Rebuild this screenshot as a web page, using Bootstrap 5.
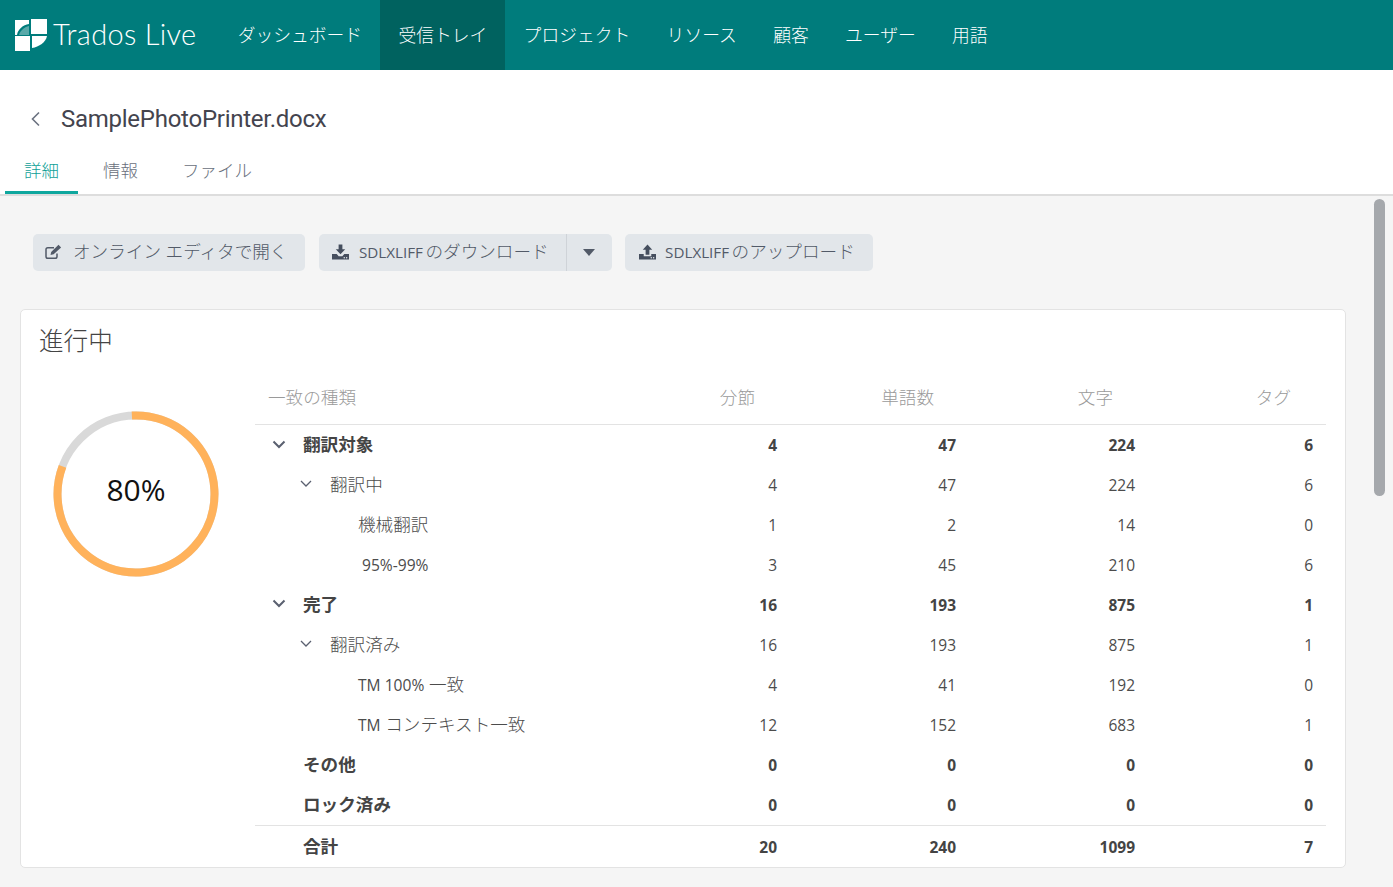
<!DOCTYPE html>
<html lang="ja">
<head>
<meta charset="utf-8">
<title>Trados Live</title>
<link href="https://cdn.jsdelivr.net/npm/bootstrap@5.3.0/dist/css/bootstrap.min.css" rel="stylesheet">
<style>
html,body{height:100%;overflow:hidden}
body{font-family:"Open Sans","Noto Sans CJK JP",sans-serif;font-size:16px;color:#444;background:#fff}
.topbar{height:70px;background:#007c7c;padding:0}
.brand-wrap{gap:6px;padding-left:15px;width:219.5px;color:#fff;flex:none}
.brand-name{font-family:Lato,sans-serif;font-weight:300;font-size:29px;letter-spacing:.3px;line-height:1;padding-bottom:3px}
.topbar .navbar-nav .nav-link{height:70px;display:flex;align-items:center;color:#fff;font-size:17.8px;font-weight:300;padding:0 18.15px}
.topbar .navbar-nav .nav-link.active{background:#00625f;color:#fff}
.head-box{height:126px;border-bottom:2px solid #ddd;background:#fff}
.title-row{height:61px;padding:37px 0 0 29px;gap:18px;align-items:center}
.doc-name{font-family:Roboto,sans-serif;font-size:24px;letter-spacing:-.26px;color:#44444e;line-height:1}
.tab-row{padding-left:5px;margin-top:26px}
.tab-row .nav-link{padding:0 19px 8px;color:#69707c;font-size:17.5px;font-weight:300;line-height:26px;border-bottom:3px solid transparent;margin-right:6px}
.tab-row .nav-link.active{color:#0f9f98;border-bottom-color:#0fa79e}
.workspace{height:691px;background:#f5f5f5;overflow:hidden}
.work-main{width:1346px;padding:38px 0 0 20px;flex:none}
.act-row{padding-left:13px;gap:13.5px;height:37px;margin-bottom:38px}
.act-btn{height:37px;background:#e2e6ea;color:#525a68;border:0;font-size:17.6px;font-weight:300;display:flex;align-items:center;border-radius:5px;white-space:nowrap;padding-top:0;padding-bottom:2px}
.act-btn .lat{font-size:15.2px;font-weight:400}
.act-tight{word-spacing:-2px}
.act-open{padding-left:12px;padding-right:18px;gap:9px}
.act-main{padding-left:13px;padding-right:17px;gap:10px;border-radius:5px 0 0 5px}
.act-up{padding-left:14px;padding-right:18px;gap:9px}
.act-caret{width:46px;justify-content:center;border-left:1px solid #cfd3d8;padding:0;border-radius:0 5px 5px 0}
.panel{height:559px;width:1326px;background:#fff;border:1px solid #e3e3e3;border-radius:5px;padding:14px 19px 0 18px}
.panel-head{font-size:24.6px;font-weight:300;color:#444;line-height:34px;margin:0}
.panel-body{margin-top:14px}
.ring-col{width:216px;flex:none;padding:39px 0 0 13.5px}
.ring-col svg{display:block}
.match-tb{width:1071px;margin:0;table-layout:fixed;border-collapse:collapse;--bs-table-bg:transparent}
.col-name{width:356px}.col-num{width:179px}.col-last{width:178px}
.match-tb th,.match-tb td{padding:3.5px 13px 0 0;border:0;height:40px;vertical-align:middle;text-align:right;font-size:15.5px;color:#4c4c4c;font-weight:400}
.match-tb thead th{height:52px;font-size:17.6px;font-weight:300;color:#9a9a9a;border-bottom:1px solid #e3e3e3;padding:0 35px 2px 0}
.match-tb thead th:first-child,.match-tb td:first-child{text-align:left;padding-right:0;padding-top:0}
.match-tb thead th:first-child{padding-left:13px}
.match-tb td:first-child{font-size:17.6px;font-weight:300}
.match-tb .lv0 td{font-weight:700;color:#444}
.match-tb .lv0 td:first-child{font-weight:700;font-size:17.6px;padding-left:48px}
.match-tb .lv1 td:first-child{padding-left:75px}
.match-tb .lv2 td:first-child{padding-left:103px}
.match-tb tr:nth-last-child(2) td{height:41px}
.match-tb .total td{border-top:1px solid #e3e3e3;height:41px}
.row-inner{display:flex;align-items:center}
.chev{flex:none;display:block}
.chev-a{margin-left:-31px;margin-right:17px}
.chev-b{margin-left:-30px;margin-right:18px}
.lat-sm{font-size:15.6px;font-weight:400}
.rail{flex:1;padding:3px 8px 0 28px}
.rail-thumb{width:11px;height:297px;background:#a5a8ac;border-radius:6px}
</style>
</head>
<body>
<nav class="navbar navbar-expand topbar">
  <div class="d-flex align-items-center brand-wrap">
    <svg width="32" height="32" viewBox="0 0 32 32" fill="#fff"><path d="M16 0h16v15H16z"/><path d="M0 17h15v15H0z"/><path d="M0 1h14v4C8 6 3 10 2 16H0z"/><path d="M14 7C9 8 5 12 4 16h10z" opacity=".35"/><path d="M17 17h15C31 23 24 28 17 29z"/></svg>
    <span class="brand-name">Trados Live</span>
  </div>
  <ul class="navbar-nav">
    <li class="nav-item"><a class="nav-link" href="#">ダッシュボード</a></li>
    <li class="nav-item"><a class="nav-link active" href="#">受信トレイ</a></li>
    <li class="nav-item"><a class="nav-link" href="#">プロジェクト</a></li>
    <li class="nav-item"><a class="nav-link" href="#">リソース</a></li>
    <li class="nav-item"><a class="nav-link" href="#">顧客</a></li>
    <li class="nav-item"><a class="nav-link" href="#">ユーザー</a></li>
    <li class="nav-item"><a class="nav-link" href="#">用語</a></li>
  </ul>
</nav>
<header class="head-box">
  <div class="d-flex title-row">
    <svg width="14" height="16" viewBox="0 0 14 16" fill="none" stroke="#6b7280" stroke-width="1.6"><path d="M10 1.5 3.5 8l6.5 6.5"/></svg>
    <span class="doc-name">SamplePhotoPrinter.docx</span>
  </div>
  <ul class="nav tab-row">
    <li class="nav-item"><a class="nav-link active" href="#">詳細</a></li>
    <li class="nav-item"><a class="nav-link" href="#">情報</a></li>
    <li class="nav-item"><a class="nav-link" href="#">ファイル</a></li>
  </ul>
</header>
<div class="d-flex workspace">
  <main class="work-main">
    <div class="d-flex act-row">
      <button class="btn act-btn act-open" type="button">
        <svg width="19" height="16" viewBox="0 0 19 16" fill="none" stroke="#525a68" stroke-width="1.5"><path d="M12 9.5V12.5a1.8 1.8 0 0 1-1.8 1.8H2.8A1.8 1.8 0 0 1 1 12.5V5.5a1.8 1.8 0 0 1 1.8-1.8H9"/><path d="M5.5 11l.7-3L13.5.8l2.6 2.6L8.6 10.3z" fill="#525a68" stroke="none"/></svg>
        <span>オンライン エディタで開く</span>
      </button>
      <div class="d-flex">
        <button class="btn act-btn act-main" type="button">
          <svg width="17" height="16" viewBox="0 0 18 16" fill="#454e5e"><path d="M7 0h4v5h3l-5 5.5L4 5h3z"/><path d="M0 10h5l2 2.5h4l2-2.5h5v6H0z"/><circle cx="13" cy="14" r=".8" fill="#e2e6ea"/><circle cx="15.5" cy="14" r=".8" fill="#e2e6ea"/></svg>
          <span class="act-tight"><span class="lat">SDLXLIFF</span> のダウンロード</span>
        </button>
        <button class="btn act-btn act-caret" type="button" aria-label="menu">
          <svg width="12" height="7" viewBox="0 0 12 7" fill="#525a68"><path d="M0 0h12L6 7z"/></svg>
        </button>
      </div>
      <button class="btn act-btn act-up" type="button">
        <svg width="17" height="16" viewBox="0 0 18 16" fill="#454e5e"><path d="M9 0l5 5.5h-3V11H7V5.5H4z"/><path d="M0 10h5v2.5h8V10h5v6H0z"/><circle cx="13" cy="14" r=".8" fill="#e2e6ea"/><circle cx="15.5" cy="14" r=".8" fill="#e2e6ea"/></svg>
        <span class="act-tight"><span class="lat">SDLXLIFF</span> のアップロード</span>
      </button>
    </div>
    <section class="panel">
      <h2 class="panel-head">進行中</h2>
      <div class="d-flex panel-body">
        <div class="ring-col">
          <svg width="166" height="166" viewBox="0 0 166 166">
            <circle cx="83" cy="83" r="78.5" fill="none" stroke="#d9d9d9" stroke-width="8"/>
            <circle cx="83" cy="83" r="78.5" fill="none" stroke="#ffb25b" stroke-width="8" stroke-dasharray="401.7 493.2" transform="rotate(-93 83 83)"/>
            <text x="83" y="90" text-anchor="middle" font-family="Open Sans,sans-serif" font-size="30" fill="#111">80%</text>
          </svg>
        </div>
        <table class="table match-tb">
          <colgroup><col class="col-name"><col class="col-num"><col class="col-num"><col class="col-num"><col class="col-last"></colgroup>
          <thead><tr><th>一致の種類</th><th>分節</th><th>単語数</th><th>文字</th><th>タグ</th></tr></thead>
          <tbody>
            <tr class="lv0"><td><span class="row-inner"><svg class="chev chev-a" width="14" height="9" viewBox="0 0 14 9" fill="none" stroke="#5a6070" stroke-width="2"><path d="M1.5 1.5 7 7l5.5-5.5"/></svg>翻訳対象</span></td><td>4</td><td>47</td><td>224</td><td>6</td></tr>
            <tr class="lv1"><td><span class="row-inner"><svg class="chev chev-b" width="12" height="8" viewBox="0 0 12 8" fill="none" stroke="#5a6070" stroke-width="1.3"><path d="M1 1l5 5 5-5"/></svg>翻訳中</span></td><td>4</td><td>47</td><td>224</td><td>6</td></tr>
            <tr class="lv2"><td>機械翻訳</td><td>1</td><td>2</td><td>14</td><td>0</td></tr>
            <tr class="lv2"><td><span class="lat-sm ps-1">95%-99%</span></td><td>3</td><td>45</td><td>210</td><td>6</td></tr>
            <tr class="lv0"><td><span class="row-inner"><svg class="chev chev-a" width="14" height="9" viewBox="0 0 14 9" fill="none" stroke="#5a6070" stroke-width="2"><path d="M1.5 1.5 7 7l5.5-5.5"/></svg>完了</span></td><td>16</td><td>193</td><td>875</td><td>1</td></tr>
            <tr class="lv1"><td><span class="row-inner"><svg class="chev chev-b" width="12" height="8" viewBox="0 0 12 8" fill="none" stroke="#5a6070" stroke-width="1.3"><path d="M1 1l5 5 5-5"/></svg>翻訳済み</span></td><td>16</td><td>193</td><td>875</td><td>1</td></tr>
            <tr class="lv2"><td><span class="lat-sm">TM 100%</span> 一致</td><td>4</td><td>41</td><td>192</td><td>0</td></tr>
            <tr class="lv2"><td><span class="lat-sm">TM</span> コンテキスト一致</td><td>12</td><td>152</td><td>683</td><td>1</td></tr>
            <tr class="lv0"><td>その他</td><td>0</td><td>0</td><td>0</td><td>0</td></tr>
            <tr class="lv0"><td>ロック済み</td><td>0</td><td>0</td><td>0</td><td>0</td></tr>
            <tr class="lv0 total"><td>合計</td><td>20</td><td>240</td><td>1099</td><td>7</td></tr>
          </tbody>
        </table>
      </div>
    </section>
  </main>
  <div class="rail"><div class="rail-thumb"></div></div>
</div>
<script src="https://cdn.jsdelivr.net/npm/bootstrap@5.3.0/dist/js/bootstrap.bundle.min.js"></script>
</body>
</html>
